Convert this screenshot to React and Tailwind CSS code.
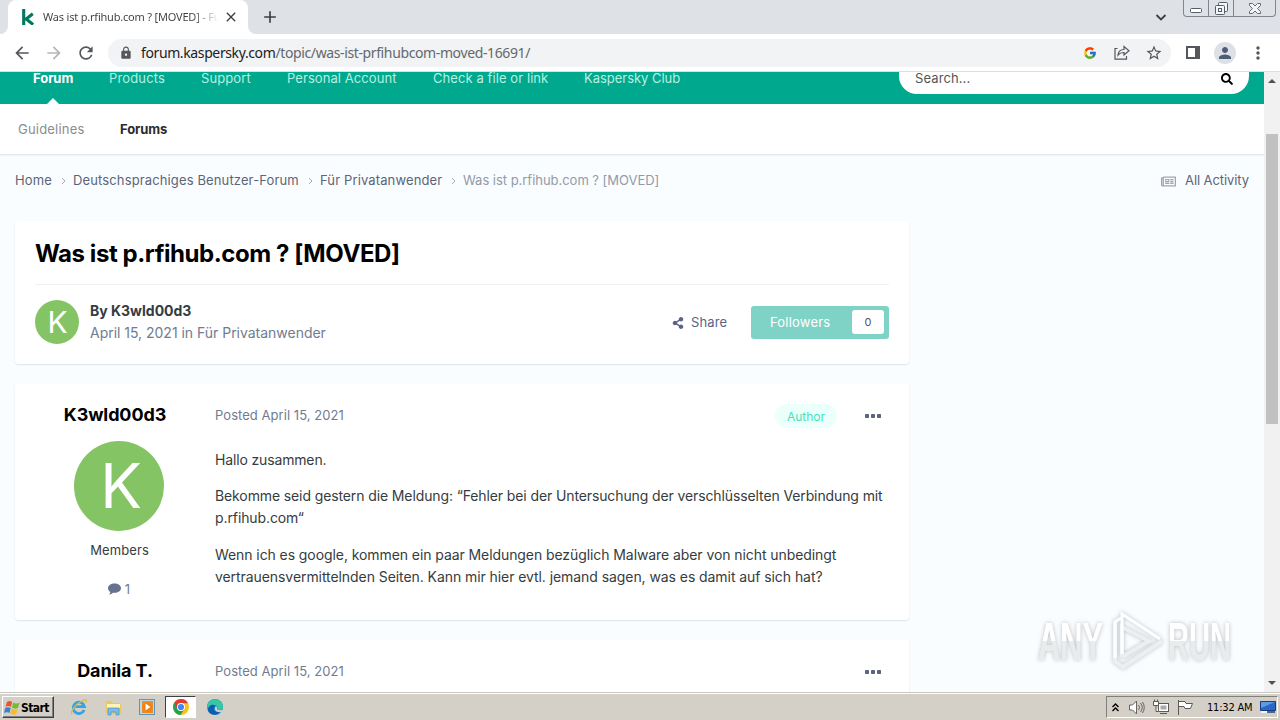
import clsx from 'clsx';
import { FaRegNewspaper, FaSearch, FaShareAlt } from 'react-icons/fa';
import { FcGoogle } from 'react-icons/fc';
import { MdAdd, MdArrowBack, MdArrowForward, MdClose, MdLock, MdMoreVert, MdPerson, MdRefresh, MdStarBorder } from 'react-icons/md';

const navItems = [
  { label: 'Forum', className: 'w-10 font-bold text-white -tracking-[0.05px]' },
  { label: 'Products', className: 'w-14 text-[#b5f0e2] tracking-[0.15px]' },
  { label: 'Support', className: 'w-[50px] text-[#b5f0e2] tracking-[0.1px]' },
  { label: 'Personal Account', className: 'w-[110px] text-[#b5f0e2] tracking-[0.07px]' },
  { label: 'Check a file or link', className: 'w-[115px] text-[#b5f0e2] tracking-[0.08px]' },
  { label: 'Kaspersky Club', className: 'w-24 text-[#b5f0e2] tracking-[-0.03px]' },
];

const crumbs = [
  { label: 'Home', className: 'w-[37px]' },
  { label: 'Deutschsprachiges Benutzer-Forum', className: 'w-[226px]' },
  { label: 'Für Privatanwender', className: 'w-[122px]' },
];

function TabStrip() {
  return (
    <div className="flex h-[34px] bg-[#dee1e6] pl-2">
      <div className="relative flex h-[34px] w-60 items-center rounded-t-lg bg-white pr-[9px] pl-[13px]">
        <svg className="absolute bottom-0 -left-2 size-2" viewBox="0 0 8 8"><path d="M8 0v8H0a8 8 0 0 0 8-8" fill="#fff" /></svg>
        <svg className="absolute -right-2 bottom-0 size-2" viewBox="0 0 8 8"><path d="M0 0v8h8a8 8 0 0 1-8-8" fill="#fff" /></svg>
        <svg className="h-4 w-[13px] shrink-0" viewBox="0 0 13 16">
          <path d="M2.700 0v16M11.800 4.800 5.200 10l7 5.600" fill="none" stroke="#00795f" strokeWidth="3.100" />
        </svg>
        <div className="ml-[9px] w-[176px] overflow-hidden bg-linear-to-r from-[#3c4043] from-85% to-transparent bg-clip-text font-['Noto_Sans',sans-serif] text-[11px] tracking-[-0.2px] whitespace-nowrap text-transparent">
          Was ist p.rfihub.com ? [MOVED] - Für Privatanwender
        </div>
        <MdClose className="ml-1 size-4 shrink-0 text-[#3c4043]" />
      </div>
      <MdAdd className="mt-[7px] ml-3 size-5 text-[#3c4043]" />
      <div className="flex-1" />
      <svg className="mt-3.5 mr-4 h-[7px] w-3" viewBox="0 0 12 7"><path d="m1.500 1 4.500 4.500L10.500 1" fill="none" stroke="#3c4043" strokeWidth="1.800" /></svg>
      <div className="mr-1 flex h-[17px] w-[93px] rounded-b-[4px] border border-t-0 border-[#81868e] text-[#555d68]">
        <div className="flex w-[25px] items-end justify-center border-r border-[#81868e] pb-[3px]">
          <svg className="h-[5px] w-3" viewBox="0 0 12 5"><rect x=".5" y=".5" width="11" height="4" rx="1" fill="#fff" stroke="currentColor" /></svg>
        </div>
        <div className="flex w-[25px] items-center justify-center border-r border-[#81868e]">
          <svg className="h-[13px] w-[13px]" viewBox="0 0 13 13" fill="#f4f5f7" stroke="currentColor">
            <rect x="3.500" y=".5" width="9" height="9" rx="1" />
            <rect x=".5" y="3.500" width="9" height="9" rx="1" />
            <rect x="3.500" y="6.500" width="3" height="3" />
          </svg>
        </div>
        <div className="flex flex-1 items-center justify-center">
          <svg className="h-[11px] w-3" viewBox="0 0 12 11"><path d="M.5.500h3L6 3 8.500.500h3v2L8.500 5.500l3 3v2h-3L6 8l-2.500 2.500h-3v-2l3-3-3-3z" fill="#f4f5f7" stroke="currentColor" strokeWidth=".9" /></svg>
        </div>
      </div>
    </div>
  );
}

function AddressBar() {
  return (
    <div className="flex h-[38px] items-center border-b border-[#dcdee1] bg-white pr-3 pl-3 text-[#54575b]">
      <MdArrowBack className="size-5" />
      <MdArrowForward className="ml-3 size-5 text-[#b4b6b9]" />
      <MdRefresh className="ml-3 size-5" />
      <div className="ml-3 flex h-7 w-[1064px] items-center rounded-full bg-[#f1f3f4] pr-2 pl-[11px]">
        <MdLock className="size-3.5" />
        <div className="ml-2 font-['Noto_Sans',sans-serif] text-sm tracking-[-0.38px] whitespace-nowrap text-[#202124]">
          forum.kaspersky.com<span className="text-[#64686d]">/topic/was-ist-prfihubcom-moved-16691/</span>
        </div>
        <div className="flex-1" />
        <FcGoogle className="size-3.5" />
        <svg className="ml-[17px] h-[15px] w-4" viewBox="0 0 16 15" fill="none" stroke="currentColor" strokeWidth="1.200">
          <path d="M3.500 3.500H1v10.700h11.500V11M4 10c.4-3.500 2.500-5.500 6-5.500V1.500l5 4.300-5 4.200V7.500C7.500 7.400 5.500 8.200 4 10z" />
        </svg>
        <MdStarBorder className="ml-[15px] size-[18px]" />
      </div>
      <svg className="ml-[15px] h-[13px] w-3.5" viewBox="0 0 14 13"><path d="M1 1h12v11H1z" fill="none" stroke="currentColor" strokeWidth="2" /><path d="M9 0h5v13H9z" fill="currentColor" /></svg>
      <div className="ml-3.5 flex size-[22px] items-center justify-center rounded-full bg-[#dde1e6]">
        <MdPerson className="size-[18px] text-[#4f5c78]" />
      </div>
      <MdMoreVert className="ml-3 size-5 shrink-0" />
    </div>
  );
}

function SiteHeader() {
  return (
    <header>
      <div className="flex h-8 bg-[#00a88e] pr-[15px] pl-[33px]">
        <nav className="flex gap-9 text-[13px] leading-3 whitespace-nowrap">
          {navItems.map((item) => (
            <a key={item.label} className={clsx('relative h-8', item.className)}>
              {item.label}
              {item.label === 'Forum' && (
                <span className="absolute bottom-0 left-3.5 border-x-[6px] border-b-[6px] border-x-transparent border-b-white" />
              )}
            </a>
          ))}
        </nav>
        <div className="ml-auto flex h-[22px] w-[350px] justify-between rounded-b-[18px] bg-white pr-4 pl-4 text-[13px] leading-3 text-[#555]">
          <span className="tracking-[0.1px]">Search...</span>
          <FaSearch className="mt-px size-3 text-black" />
        </div>
      </div>
      <div className="flex h-[51px] items-center gap-9 border-b border-[#e6e8ea] bg-white pt-px pl-[18px] text-[13px] whitespace-nowrap shadow-[0_1px_1px_rgba(0,0,0,0.03)]">
        <span className="w-[66px] tracking-[0.2px] text-[#8a8d90]">Guidelines</span>
        <span className="font-bold tracking-[-0.1px] text-[#2b2b2b]">Forums</span>
      </div>
    </header>
  );
}

function Breadcrumbs() {
  return (
    <div className="flex h-5 items-center text-[13px] whitespace-nowrap text-[#5b6577]">
      {crumbs.map((crumb) => (
        <div key={crumb.label} className="flex items-center">
          <span className={clsx('tracking-[0.13px]', crumb.className)}>{crumb.label}</span>
          <svg className="mr-2 ml-2.5 h-2 w-[3px] overflow-visible" viewBox="0 0 3 8"><path d="m0 1 3 3-3 3" fill="none" stroke="#a4abb6" /></svg>
        </div>
      ))}
      <span className="tracking-[-0.03px] text-[#929aa8]">Was ist p.rfihub.com ? [MOVED]</span>
      <div className="ml-auto flex items-center gap-[9px]">
        <FaRegNewspaper className="size-[15px] text-[#a0a6ae]" />
        <span className="w-16 tracking-[-0.08px]">All Activity</span>
      </div>
    </div>
  );
}

function Avatar({ className }) {
  return (
    <div className={clsx('flex shrink-0 items-center justify-center rounded-full bg-[#85c465] leading-none text-white', className)}>K</div>
  );
}

function TopicHeader() {
  return (
    <section className="mt-[30px] h-[143px] rounded bg-white px-5 shadow-[0_1px_2px_rgba(0,0,0,0.1)]">
      <div className="h-16 border-b border-[#eeeff1] pt-[17px]">
        <h1 className="text-2xl leading-8 font-bold tracking-[-0.43px] whitespace-nowrap text-black">Was ist p.rfihub.com ? [MOVED]</h1>
      </div>
      <div className="flex items-center pt-[15px]">
        <Avatar className="size-11 pl-px text-[30px]" />
        <div className="ml-[11px] text-sm leading-[22px] whitespace-nowrap">
          <p className="font-bold text-[#353c41]">By K3wld00d3</p>
          <p className="tracking-[-0.02px] text-[#717c90]">April 15, 2021 in Für Privatanwender</p>
        </div>
        <div className="ml-auto flex items-center gap-[7px] pt-px text-[13px] text-[#5b6484]">
          <FaShareAlt className="size-3" />
          <span className="w-9 tracking-[0.1px]">Share</span>
        </div>
        <div className="ml-6 flex h-[33px] w-[138px] items-center justify-between rounded-[3px] bg-[#7fd3c6] pr-[5px] pl-[19px] text-[13px] text-white">
          <span className="pt-px tracking-[0.2px]">Followers</span>
          <span className="flex h-6 w-8 items-center justify-center rounded-[3px] bg-white text-[11px] text-[#555]">0</span>
        </div>
      </div>
    </section>
  );
}

function Post({ author, group, className, isAuthor, children }) {
  return (
    <article className={clsx('mt-5 flex rounded bg-white shadow-[0_1px_2px_rgba(0,0,0,0.1)]', className)}>
      <aside className="flex w-[200px] shrink-0 flex-col items-center pt-[19px]">
        <h3 className="text-lg leading-6 font-bold tracking-[-0.1px] whitespace-nowrap text-black">{author}</h3>
        {group && (
          <>
            <Avatar className="mt-3.5 ml-2 size-[90px] pb-px pl-1 text-[62px]" />
            <p className="mt-[9px] ml-[9px] text-[13px] leading-5 tracking-[0.1px] text-[#353c41]">{group}</p>
            <p className="mt-[21px] ml-2 flex items-center gap-1 text-[13px] leading-4 text-[#717c90]">
              <svg className="h-3 w-[13px]" viewBox="0 0 13 12" fill="#66738f">
                <path d="M6.500 0.500C10 .5 13 2.500 13 5.200S10 9.800 6.500 9.800c-.5 0-1 0-1.500-.1C3.800 10.800 2.500 11.500 1 11.700c.7-.8 1.200-1.600 1.300-2.800C.9 8 0 6.700 0 5.200 0 2.500 3 .5 6.500.5z" />
              </svg>1
            </p>
          </>
        )}
      </aside>
      <div className="min-w-0 flex-1 pt-5 pr-7">
        <div className="flex h-6 items-center text-[13px] text-[#717c90]">
          <span className="tracking-[0.05px]">Posted April 15, 2021</span>
          <div className="flex-1" />
          {isAuthor && (
            <span className="mr-7 flex h-6 w-[62px] items-center justify-center rounded-full bg-[#ebfffb] pt-px text-xs text-[#43e3bd]">Author</span>
          )}
          <svg className="h-1 w-4" viewBox="0 0 16 4" fill="#5b6380"><rect width="4" height="4" rx=".7" /><rect x="6" width="4" height="4" rx=".7" /><rect x="12" width="4" height="4" rx=".7" /></svg>
        </div>
        {children}
      </div>
    </article>
  );
}

function Watermark() {
  return (
    <div className="absolute top-[536px] left-[1038px] flex h-[66px] w-[196px] items-center justify-between drop-shadow-[0_0_2px_rgba(0,0,0,0.25)]">
      <span className="w-[66px] origin-left scale-x-[0.57] bg-linear-to-b from-white from-50% to-[#e9eced] to-50% bg-clip-text font-['Liberation_Sans',sans-serif] text-[54px] leading-none font-bold whitespace-nowrap text-transparent">
        <span className="inline-block bg-linear-to-b from-white from-50% to-[#e9eced] to-50% bg-clip-text">ANY</span>
      </span>
      <svg className="h-[62px] w-[58px] shrink-0" viewBox="0 0 58 62" fill="none" stroke="#eceff0" strokeWidth="4">
        <path d="M8 12v39l8 6 39-26" />
        <path d="M15 47V17l27 14-27 16" />
        <path d="M8 48V12l6-4M15 44V4l38 25" stroke="#fff" strokeWidth="3" />
      </svg>
      <span className="w-[66px] origin-left scale-x-[0.54] font-['Liberation_Sans',sans-serif] text-[54px] leading-none font-bold whitespace-nowrap text-transparent">
        <span className="inline-block bg-linear-to-b from-white from-50% to-[#e9eced] to-50% bg-clip-text">RUN</span>
      </span>
    </div>
  );
}

function Scrollbar() {
  return (
    <div className="flex h-full w-4 shrink-0 flex-col items-center bg-[#f1f1f1]">
      <div className="mt-[7px] border-x-4 border-b-4 border-x-transparent border-b-[#505050]" />
      <div className="mt-[51px] h-[290px] w-3 bg-[#c1c1c1]" />
      <div className="mt-auto mb-[7px] border-x-4 border-t-4 border-x-transparent border-t-[#505050]" />
    </div>
  );
}

function WindowsFlag() {
  return (
    <svg className="h-[15px] w-4 shrink-0" viewBox="0 0 16 15">
      <path d="M3 2q3-2 5 0L7 7Q4 5 1.500 7z" fill="#e7552c" />
      <path d="M9 2.500q3 2 6.500 0L14 8q-3 1.500-6-.500z" fill="#7ab83b" />
      <path d="M1.200 8Q4 6.500 6.700 8L5.500 13Q3 11.500 0 13z" fill="#3c83cf" />
      <path d="M7.700 8.500q3 2 6 .500l-1.500 5q-3 1.500-6-.500z" fill="#f4bd27" />
    </svg>
  );
}

function Taskbar() {
  return (
    <footer className="flex h-7 items-center border-t border-[#c9c6bf] bg-[#d4d0c8] pt-px pr-0.5 pl-0.5 font-['DejaVu_Sans_Condensed','DejaVu_Sans',sans-serif] shadow-[inset_0_1px_0_#fff]">
      <button className="flex h-[22px] w-[52px] items-center border border-t-white border-r-[#404040] border-b-[#404040] border-l-white pl-px text-xs font-bold tracking-[-0.6px] text-black shadow-[inset_-1px_-1px_0_#808080]">
        <WindowsFlag /><span className="pt-0.5 pl-px">Start</span>
      </button>
      <svg className="ml-4 size-[18px]" viewBox="0 0 18 18" fill="none">
        <path d="M14.200 12A5.700 5.700 0 1 1 14.500 8.700H5" stroke="#35a4e0" strokeWidth="2.800" />
        <path d="M2 16C0 14 5 7 11 3.500 15 1 17.500 1.500 16 4.500" stroke="#e5b943" strokeWidth="1.300" />
      </svg>
      <svg className="ml-[17px] size-[17px]" viewBox="0 0 17 17">
        <path d="M1 2h6l1 2h8v11H1z" fill="#e9c765" /><path d="M2 5h13v4H2z" fill="#fff3b5" />
        <path d="M3 16V9h11v7h-3v-3H6v3z" fill="#79bce5" stroke="#4e94bd" strokeWidth=".7" />
      </svg>
      <svg className="ml-[17px] size-4" viewBox="0 0 16 16">
        <rect x=".5" y=".5" width="15" height="15" fill="#b9d7ed" stroke="#5b96c2" />
        <path d="M3 2h11v12H3z" fill="#f08b1d" /><circle cx="8.500" cy="8" r="4.500" fill="#ee7f13" /><path d="m6.500 4.500 5 3.500-5 3.500z" fill="#fff" />
      </svg>
      <div className="ml-2.5 flex h-[22px] w-[31px] items-center justify-center border border-t-[#404040] border-r-white border-b-white border-l-[#404040] bg-white">
        <svg className="size-4" viewBox="0 0 16 16">
          <circle cx="8" cy="8" r="8" fill="#fbc116" />
          <path d="M8 8 1.100 4A8 8 0 0 0 7.500 16l4-6z" fill="#27a14b" /><path d="M1.100 4A8 8 0 0 1 15 4.300H8L4.500 10z" fill="#e33b2e" />
          <circle cx="8" cy="8" r="4" fill="#fff" /><circle cx="8" cy="8" r="3.100" fill="#4285f4" />
        </svg>
      </div>
      <svg className="ml-[11px] size-4" viewBox="0 0 16 16">
        <circle cx="8" cy="8" r="8" fill="#1683d3" />
        <path d="M.3 6A8 8 0 0 1 16 8c0 3-4 4-6 2.500 1-2 0-4.500-3-4.500-3 0-5 2-6.700 4z" fill="#35c9a2" />
        <path d="M1 11c0-5 6-7 7.500-3.500C5 8 6 13 13 13 8 18 1.500 15 1 11" fill="#0c5cb2" />
        <path d="M8.500 7.500c2 0 1.500 2 1.500 3 2 1 4 .8 5.500 0l-1 2.500c-5 1-8-2-6-5.500" fill="#d4d0c8" />
      </svg>
      <div className="ml-auto flex h-[22px] w-[172px] items-center border border-t-[#808080] border-r-white border-b-white border-l-[#808080] pl-[5px]">
        <svg className="h-[9px] w-[7px]" viewBox="0 0 7 9"><path d="m.5 4 3-3 3 3M.5 8l3-3 3 3" fill="none" stroke="#000" strokeWidth="1.400" /></svg>
        <svg className="ml-2.5 h-[15px] w-4" viewBox="0 0 16 15" fill="none" stroke="#66645f"><path d="M.5 5h3l4-4v13l-4-4h-3z" fill="#fff" /><path d="M9.500 5q2 2.500 0 5M11.500 3q3.500 4.500 0 9M13.500 2q3.500 5.500 0 11" /></svg>
        <svg className="ml-2 size-4" viewBox="0 0 16 16" fill="#fff" stroke="#5c5a56"><rect x="5.500" y="4.500" width="10" height="8" /><path d="M7.500 6.500h6v4h-6z" fill="#aaa" stroke="none" /><path d="M7 14.500h7M.5 2.500h5v4h-5zM1.500.500v2M4.500.500v2M3 6.500v6h2.500" /></svg>
        <svg className="ml-2 h-[15px] w-[17px]" viewBox="0 0 17 15" fill="#fff" stroke="#5c5a56"><path d="M1.500 0v15M2 1.500h6l1 2h6.500l-2 5H8l-1-2H2" /></svg>
        <span className="ml-[13px] w-[47px] pt-0.5 text-[11px] tracking-[-0.2px] whitespace-nowrap text-black">11:32 AM</span>
        <svg className="ml-1.5 h-[13px] w-4" viewBox="0 0 16 13"><path d="M.5.500h15v9H.5z" fill="#2867c5" stroke="#173d80" /><path d="M1 1h14L1 7z" fill="#5b9ce4" /><path d="M1 10h6v2H1z" fill="#f1f4f8" /><path d="M7 10h8v2H7z" fill="#49688c" /></svg>
      </div>
    </footer>
  );
}

export default function App() {
  return (
    <div className="flex h-[720px] w-[1280px] flex-col overflow-hidden bg-white font-['Inter',sans-serif]">
      <TabStrip />
      <AddressBar />
      <div className="relative flex h-[620px] overflow-hidden">
        <div className="w-[1264px] bg-[#fafdff]">
          <SiteHeader />
          <main className="px-[15px] pt-4">
            <Breadcrumbs />
            <div className="w-[894px]">
              <TopicHeader />
              <Post author="K3wld00d3" group="Members" className="h-[236px]" isAuthor>
                <div className="mt-[21px] text-sm leading-[22px] whitespace-nowrap text-[#353c41]">
                  <p className="tracking-[-0.15px]">Hallo zusammen.</p>
                  <p className="mt-3.5">
                    <span className="tracking-[-0.114px]">Bekomme seid gestern die Meldung: “Fehler bei der Untersuchung der verschlüsselten Verbindung mit</span>
                    <br />
                    <span className="tracking-[-0.1px]">p.rfihub.com“</span>
                  </p>
                  <p className="mt-[15px]">
                    <span className="tracking-[-0.08px]">Wenn ich es google, kommen ein paar Meldungen bezüglich Malware aber von nicht unbedingt</span>
                    <br />
                    <span className="tracking-[-0.07px]">vertrauensvermittelnden Seiten. Kann mir hier evtl. jemand sagen, was es damit auf sich hat?</span>
                  </p>
                </div>
              </Post>
              <Post author="Danila T." className="h-[60px]" />
            </div>
          </main>
        </div>
        <Scrollbar />
        <Watermark />
      </div>
      <Taskbar />
    </div>
  );
}
